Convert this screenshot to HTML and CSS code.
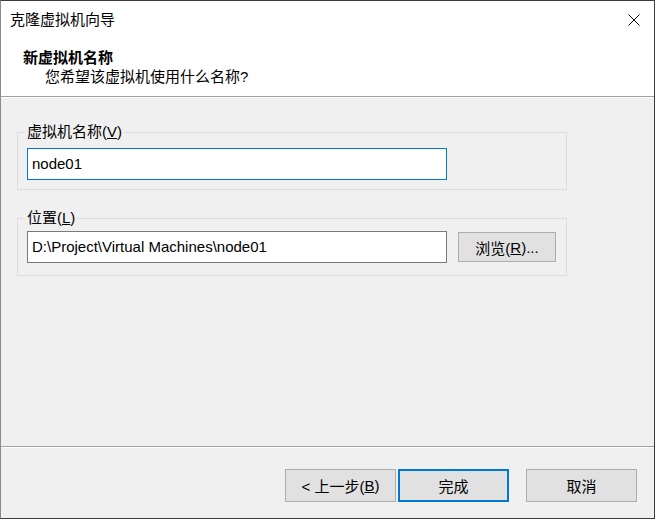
FILE: index.html
```html
<!DOCTYPE html>
<html lang="zh-CN">
<head>
<meta charset="utf-8">
<title>克隆虚拟机向导</title>
<link rel="stylesheet" href="styles.css">
</head>
<body>
<div class="window">
  <div class="titlebar">
    <span class="title">克隆虚拟机向导</span>
    <span class="close">
      <svg width="12" height="12" viewBox="0 0 12 12"><path d="M0.5 0.5 L11.5 11.5 M11.5 0.5 L0.5 11.5" stroke="#000" stroke-width="1" fill="none"/></svg>
    </span>
  </div>
  <div class="header">
    <div class="h-title">新虚拟机名称</div>
    <div class="h-sub">您希望该虚拟机使用什么名称?</div>
  </div>
  <div class="main">
    <fieldset class="group group-name">
      <legend>虚拟机名称(<u>V</u>)</legend>
      <div class="row">
        <div class="input focused">node01</div>
      </div>
    </fieldset>
    <fieldset class="group group-loc">
      <legend>位置(<u>L</u>)</legend>
      <div class="row">
        <div class="input">D:\Project\Virtual Machines\node01</div>
        <div class="btn browse">浏览(<u>R</u>)...</div>
      </div>
    </fieldset>
  </div>
  <div class="footer">
    <div class="btn wide">&lt; 上一步(<u>B</u>)</div>
    <div class="btn wide primary">完成</div>
    <div class="btn wide cancel">取消</div>
  </div>
</div>
</body>
</html>
```
FILE: styles.css
```css
* { box-sizing: border-box; }
html, body { margin: 0; padding: 0; background: #f0f0f0; }
body {
  font-family: "Liberation Sans", "Noto Sans CJK SC", sans-serif;
  font-size: 15px;
  color: #000;
}
.window {
  width: 655px;
  height: 519px;
  border-top: 1px solid #3c3c3c;
  border-right: 1px solid #3c3c3c;
  border-bottom: 1px solid #3c3c3c;
  border-left: 1px solid #8a8a8a;
  background: #f0f0f0;
  display: flex;
  flex-direction: column;
}
.titlebar {
  height: 38px;
  background: #fff;
  display: flex;
  align-items: center;
  padding: 0 14px 0 9px;
}
.title { line-height: 20px; }
.close { margin-left: auto; display: flex; }
.close svg { display: block; }
.header {
  background: #fff;
  padding: 9px 0 9px 22px;
  height: 58px;
  border-bottom: 1px solid #a0a0a0;
  box-shadow: 0 1px 0 #fff;
}
.h-title { font-weight: 700; line-height: 20px; }
.h-sub { line-height: 18px; padding-left: 22px; }
.main {
  flex: 1;
  padding: 25px 0 0 16px;
}
.group {
  width: 550px;
  margin: 0;
  border: 1px solid #dcdcdc;
  padding: 0 0 9px 9px;
}
.group legend {
  padding: 0 2px;
  margin-left: -2px;
  line-height: 20px;
}
.group-name .row { margin-top: 6px; }
.group-loc { margin-top: 18px; padding-bottom: 12px; }
.group-loc .row { margin-top: 3px; }
.row { display: flex; align-items: center; }
.input {
  width: 420px;
  height: 32px;
  line-height: 30px;
  background: #fff;
  border: 1px solid #7a7a7a;
  padding: 0 4px;
  white-space: nowrap;
}
.input.focused { border-color: #0078d7; }
.btn {
  background: #e1e1e1;
  border: 1px solid #adadad;
  display: flex;
  align-items: center;
  justify-content: center;
  white-space: nowrap;
}
.browse {
  width: 98px;
  height: 30px;
  margin-left: 11px;
}
.footer {
  height: 72px;
  border-top: 1px solid #a0a0a0;
  box-shadow: inset 0 1px 0 #fff;
  display: flex;
  justify-content: flex-end;
  align-items: flex-start;
  padding: 22px 17px 0 0;
}
.wide { width: 111px; height: 33px; }
.primary { border: 2px solid #0078d7; margin-left: 2px; }
.cancel { margin-left: 17px; }
```
